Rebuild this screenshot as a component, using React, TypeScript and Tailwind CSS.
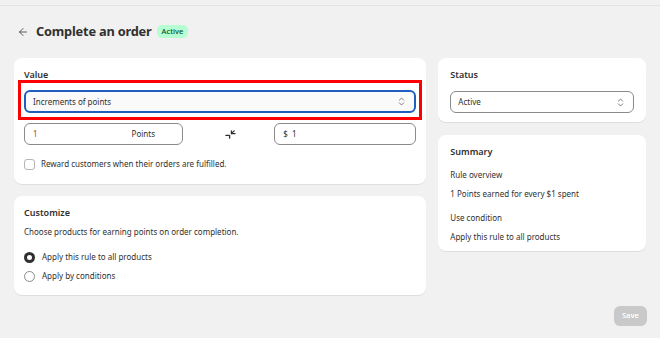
import { ArrowLeft } from 'lucide-react'

function UpDown() {
  return (
    <svg width="7" height="9" viewBox="0 0 8 10" fill="none" stroke="#6b6b6b" strokeWidth="1" strokeLinecap="round" strokeLinejoin="round">
      <path d="M1.5 3.5 4 1l2.5 2.5" />
      <path d="M1.5 6.5 4 9l2.5-2.5" />
    </svg>
  )
}

function Pinch() {
  return (
    <svg width="11" height="11" viewBox="0 0 12 12" fill="none" stroke="#303030" strokeWidth="1.4" strokeLinecap="round" strokeLinejoin="round">
      <path d="M1 7h4v3" />
      <path d="M11 5H7V2" />
      <path d="M7 5l3-3" />
    </svg>
  )
}

function Card({ children, className = '' }: { children: React.ReactNode; className?: string }) {
  return <div className={`bg-white rounded-[8px] shadow-[0_1px_0_rgba(0,0,0,0.08)] ${className}`}>{children}</div>
}

export default function App() {
  return (
    <div className="w-[660px] h-[338px] bg-[#f1f1f1] text-[#303030] font-['Noto_Sans',sans-serif] overflow-hidden">
      <div className="h-[6px] border-b border-[#e3e3e3]" />

      <div className="flex items-center gap-[7px] pl-[17px] mt-[13px] h-[25px]">
        <ArrowLeft className="w-[12px] h-[12px] text-[#4a4a4a]" strokeWidth={1.8} />
        <h1 className="text-[12.8px] font-bold tracking-[-0.2px] text-[#303030]">Complete an order</h1>
        <span className="ml-[-2px] rounded-[5px] bg-[#b4fed2] px-[5px] h-[13px] leading-[13px] text-[7.5px] font-medium text-[#0c5132]">Active</span>
      </div>

      <div className="flex gap-[12px] px-[14px] mt-[14px]">
        <div className="w-[413px] flex flex-col gap-[12px]">
          <Card className="h-[126px] px-[10px] pt-[10px]">
            <div className="text-[9px] font-semibold leading-[14px]">Value</div>
            <div className="relative mt-[8px]">
              <div className="h-[23px] rounded-[6px] border-2 border-[#1f5fbf] bg-[#fafafa] flex items-center justify-between pl-[7px] pr-[9px] text-[8px]">
                <span>Increments of points</span>
                <UpDown />
              </div>
              <div className="absolute left-[-6px] right-[-6px] top-[-10px] bottom-[-7px] border-[3px] border-[#ff0000] pointer-events-none" />
            </div>
            <div className="flex items-center mt-[10px]">
              <div className="w-[159px] h-[22px] rounded-[6px] border border-[#8a8a8a] flex items-center justify-between pl-[8px] pr-[27px] text-[8px]">
                <span className="text-[#b54700]">1</span>
                <span>Points</span>
              </div>
              <div className="flex-1 flex justify-center pl-[4px]">
                <Pinch />
              </div>
              <div className="w-[142px] h-[22px] rounded-[6px] border border-[#8a8a8a] flex items-center gap-[4px] pl-[8px] text-[8px]">
                <span>$</span>
                <span>1</span>
              </div>
            </div>
            <label className="flex items-center gap-[6px] mt-[13px] text-[8px]">
              <span className="w-[11px] h-[11px] rounded-[3px] border border-[#b5b5b5] bg-white" />
              <span>Reward customers when their orders are fulfilled.</span>
            </label>
          </Card>

          <Card className="h-[99px] px-[10px] pt-[10px]">
            <div className="text-[9px] font-semibold leading-[14px]">Customize</div>
            <div className="text-[8px] mt-[5px] leading-[14px]">Choose products for earning points on order completion.</div>
            <div className="flex flex-col gap-[7px] mt-[12px] text-[8px]">
              <div className="flex items-center gap-[7px]">
                <span className="w-[11px] h-[11px] rounded-full border-[3.5px] border-[#303030] bg-white" />
                <span>Apply this rule to all products</span>
              </div>
              <div className="flex items-center gap-[7px]">
                <span className="w-[11px] h-[11px] rounded-full border border-[#8a8a8a] bg-white" />
                <span>Apply by conditions</span>
              </div>
            </div>
          </Card>
        </div>

        <div className="w-[208px] flex flex-col gap-[13px]">
          <Card className="h-[64px] px-[12px] pt-[10px]">
            <div className="text-[9px] font-semibold leading-[14px]">Status</div>
            <div className="mt-[9px] h-[22px] rounded-[6px] border border-[#8a8a8a] flex items-center justify-between pl-[7px] pr-[9px] text-[8px]">
              <span>Active</span>
              <UpDown />
            </div>
          </Card>

          <Card className="h-[116px] px-[12px] pt-[10px] text-[8px]">
            <div className="text-[9px] font-semibold leading-[14px]">Summary</div>
            <div className="mt-[9px] leading-[14px]">Rule overview</div>
            <div className="mt-[5px] leading-[14px]">1 Points earned for every $1 spent</div>
            <div className="mt-[10px] leading-[14px]">Use condition</div>
            <div className="mt-[5px] leading-[14px]">Apply this rule to all products</div>
          </Card>
        </div>
      </div>

      <div className="flex justify-end pr-[13px] mt-[11px]">
        <button className="h-[20px] w-[33px] rounded-[6px] bg-[#c9c9c9] text-white text-[7.5px] font-semibold">Save</button>
      </div>
    </div>
  )
}
